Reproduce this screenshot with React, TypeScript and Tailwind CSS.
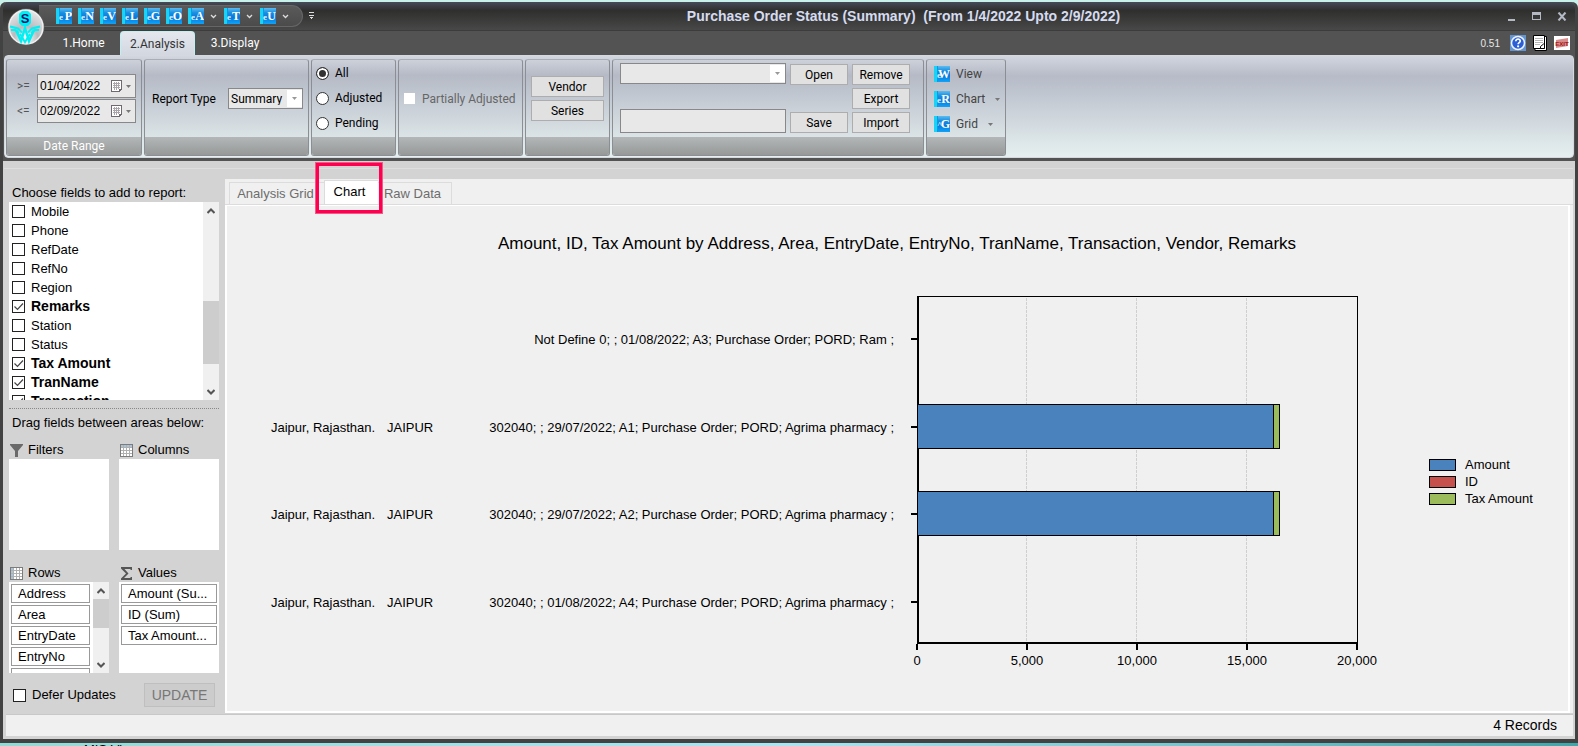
import { useState } from 'react';

const quickTools = [
  { letter: 'P' },
  { letter: 'N' },
  { letter: 'V' },
  { letter: 'L' },
  { letter: 'G' },
  { letter: 'O' },
  { letter: 'A', menu: true },
  { letter: 'T', menu: true },
  { letter: 'U', menu: true },
];

const fieldNames = ['Mobile', 'Phone', 'RefDate', 'RefNo', 'Region', 'Remarks', 'Station', 'Status', 'Tax Amount', 'TranName', 'Transaction'];

const rowFields = ['Address', 'Area', 'EntryDate', 'EntryNo', 'TranName'];
const valueFields = ['Amount (Su...', 'ID (Sum)', 'Tax Amount...'];

const chartRows = [
  { address: '', area: '', rest: 'Not Define 0; ; 01/08/2022; A3; Purchase Order; PORD; Ram ;', amount: 0, tax: 0 },
  { address: 'Jaipur, Rajasthan.', area: 'JAIPUR', rest: '302040; ; 29/07/2022; A1; Purchase Order; PORD; Agrima pharmacy ;', amount: 16200, tax: 250 },
  { address: 'Jaipur, Rajasthan.', area: 'JAIPUR', rest: '302040; ; 29/07/2022; A2; Purchase Order; PORD; Agrima pharmacy ;', amount: 16200, tax: 250 },
  { address: 'Jaipur, Rajasthan.', area: 'JAIPUR', rest: '302040; ; 01/08/2022; A4; Purchase Order; PORD; Agrima pharmacy ;', amount: 0, tax: 0 },
];

const legend = [
  { label: 'Amount', color: '#4a82bd' },
  { label: 'ID', color: '#c6504b' },
  { label: 'Tax Amount', color: '#9cbb5a' },
];

function BookIcon({ letter, prefix = 'e' }: { letter: string; prefix?: string }) {
  return (
    <svg width="16" height="16" viewBox="0 0 16 16" className="shrink-0" aria-hidden="true">
      <defs>
        <linearGradient id="book" x1="0" y1="0" x2="0" y2="1">
          <stop offset="0" stopColor="#5cbcf0" />
          <stop offset="0.3" stopColor="#1a8ee0" />
          <stop offset="0.6" stopColor="#0878dc" />
          <stop offset="1" stopColor="#10a4f8" />
        </linearGradient>
      </defs>
      <rect width="16" height="16" fill="url(#book)" />
      <rect width="4" height="16" fill="#1cd2f4" />
      <rect x="3" width="1" height="16" fill="#0b9be6" />
      <text x="3" y="12" fontSize="9" fontWeight="700" fill="#d8f2ff" fontFamily="Liberation Serif, serif">{prefix}</text>
      <text x="16" y="12" textAnchor="end" fontSize="12" fontWeight="700" fill="#fff" fontFamily="Liberation Serif, serif">{letter}</text>
    </svg>
  );
}

function Caret({ className = '' }: { className?: string }) {
  return (
    <svg width="5" height="3" viewBox="0 0 5 3" className={`shrink-0 ${className}`} aria-hidden="true">
      <path d="M0 0h5L2.5 3z" fill="currentColor" />
    </svg>
  );
}

function Chevron({ up = false }: { up?: boolean }) {
  return (
    <svg width="8" height="6" viewBox="0 0 8 6" aria-hidden="true">
      <path d={up ? 'M0.5 5L4 1.5 7.5 5' : 'M0.5 1L4 4.5 7.5 1'} fill="none" stroke="#555" strokeWidth="2" />
    </svg>
  );
}

function Logo() {
  return (
    <svg width="38" height="38" viewBox="0 0 38 38" aria-hidden="true">
      <defs>
        <radialGradient id="orb" cx="0.5" cy="0.85" r="0.8">
          <stop offset="0" stopColor="#fff" />
          <stop offset="0.45" stopColor="#b9bbbe" />
          <stop offset="1" stopColor="#e2e3e5" />
        </radialGradient>
      </defs>
      <circle cx="19" cy="19" r="18.500" fill="#5c5c5c" />
      <circle cx="19" cy="19" r="17" fill="url(#orb)" stroke="#f0f0f0" strokeWidth="1.500" />
      <path d="M15 3h6l3 3v9l-3 3h-6l-3-3V6z" fill="#00f0f4" />
      <text x="18" y="15" textAnchor="middle" fontSize="13" fontWeight="700" fill="#07156e" fontFamily="Liberation Sans, sans-serif">S</text>
      <g fill="none" stroke="#00f0f4" strokeWidth="2">
        <path d="M3 18.500l8 2 4 4M33 18.500l-8 2-4 4" />
        <path d="M4 22h4l4 3M32 22h-4l-4 3" />
        <path d="M9 22l5 11 4-13 4 13 5-11" strokeWidth="2.500" />
        <path d="M13 26l5 8 5-8" />
      </g>
    </svg>
  );
}

function GridIcon({ side }: { side: 'top' | 'left' }) {
  return (
    <svg width="13" height="13" viewBox="0 0 13 13" shapeRendering="crispEdges" aria-hidden="true">
      <rect width="13" height="13" fill="#7c7c7c" />
      <rect x="1" y="1" width="11" height="11" fill="#fff" />
      {side === 'top' ? <rect x="1" y="1" width="11" height="3" fill="#a9c3dc" /> : <rect x="1" y="1" width="3" height="11" fill="#a9c3dc" />}
      <path d="M3.500 1v11M6.500 1v11M9.500 1v11M1 3.500h11M1 6.500h11M1 9.500h11" stroke="#b0b0b0" />
    </svg>
  );
}

function RibbonGroup({ width, title = '', children }: { width: string; title?: string; children: React.ReactNode }) {
  return (
    <section className={`flex shrink-0 flex-col overflow-hidden rounded-[3px] border border-[#8b8f94] border-t-[#a9adb4] bg-linear-to-b from-[#cdd1da] from-0% via-[#b5bac6] via-16% to-[#e6f0f0] ${width}`}>
      <div className="flex min-h-0 flex-1 flex-col">{children}</div>
      <div className="h-[18px] bg-linear-to-b from-[#b3b7b7] to-[#979999] text-center text-[12px] leading-[18px] text-white">{title}</div>
    </section>
  );
}

function DateField({ label, value }: { label: string; value: string }) {
  return (
    <label className="flex items-center">
      <span className="w-5 text-[12px] text-[#555]">{label}</span>
      <span className="flex h-6 flex-1 items-center border border-[#888] bg-[#e8e8e8] pr-1">
        <input defaultValue={value} className="w-[73px] bg-transparent pl-[2px] font-['Liberation_Sans',Arial,sans-serif] text-[12px] text-black outline-none" />
        <svg width="11" height="12" viewBox="0 0 11 12" shapeRendering="crispEdges" aria-hidden="true">
          <path d="M0 0h11v9l-3 3H0z" fill="#6f6a72" />
          <path d="M1 1h9v8H8v2H1z" fill="#fff" />
          <path d="M3.500 2v8M5.500 2v8M7.500 2v7M2 3.500h7M2 5.500h7M2 7.500h7" stroke="#aaa5ad" />
        </svg>
        <Caret className="ml-1 text-[#777]" />
      </span>
    </label>
  );
}

function RibbonButton({ children, width = 'w-[58px]' }: { children: React.ReactNode; width?: string }) {
  return <button className={`h-[21px] border border-[#adadad] bg-[#e1e1e1] text-[12px] leading-none text-black ${width}`}>{children}</button>;
}

function CheckBox({ id, checked, onChange }: { id: string; checked: boolean; onChange: () => void }) {
  return (
    <span className="relative flex h-[13px] w-[13px] shrink-0">
      <input id={id} type="checkbox" checked={checked} onChange={onChange} className="h-[13px] w-[13px] appearance-none border border-[#222] bg-white" />
      {checked && (
        <svg width="13" height="13" viewBox="0 0 13 13" className="pointer-events-none absolute inset-0" aria-hidden="true">
          <path d="M2.500 6.500l3 3 5.500-6" fill="none" stroke="#444" strokeWidth="1.200" />
        </svg>
      )}
    </span>
  );
}

function FieldChip({ label }: { label: string }) {
  return <li className="h-[19px] shrink-0 truncate border border-[#999] bg-white pl-[6px] text-[13px] leading-[17px]">{label}</li>;
}

function Chart() {
  const left = 691;
  const scale = 440 / 20000;
  return (
    <svg viewBox="0 0 1341 500" preserveAspectRatio="xMinYMin meet" className="h-full w-full" fontFamily="Liberation Sans, Arial, sans-serif" fontSize="13" role="img" aria-label="Amount, ID and Tax Amount by order">
      <text x="670" y="43" textAnchor="middle" fontSize="17">
        Amount, ID, Tax Amount by Address, Area, EntryDate, EntryNo, TranName, Transaction, Vendor, Remarks
      </text>
      <g shapeRendering="crispEdges">
        {[1, 2, 3].map(i => (
          <path key={i} d={`M${left + i * 110 - 1.5} 92V436`} stroke="#cfcfcf" strokeDasharray="3 1" />
        ))}
        <path d="M690 90.500H1130.500V436" fill="none" stroke="#000" />
        <path d="M691 90V437H1131" fill="none" stroke="#000" strokeWidth="2" />
      </g>
      {chartRows.map((row, i) => {
        const mid = [133, 221, 308, 396][i];
        const amount = Math.round(row.amount * scale);
        const tax = Math.round(row.tax * scale);
        return (
          <g key={row.rest}>
            <path d={`M684 ${mid}H690`} stroke="#000" strokeWidth="2" shapeRendering="crispEdges" />
            <text x="44" y={mid + 5}>{row.address}</text>
            <text x="160" y={mid + 5}>{row.area}</text>
            <text x="667" y={mid + 5} textAnchor="end">{row.rest}</text>
            {row.amount > 0 && (
              <g stroke="#000" shapeRendering="crispEdges">
                <rect x="690.500" y={mid - 22.5} width={amount} height="44" fill="#4a82bd" />
                <rect x={690.5 + amount} y={mid - 22.5} width={tax} height="44" fill="#9cbb5a" />
              </g>
            )}
          </g>
        );
      })}
      {[0, 5000, 10000, 15000, 20000].map(tick => (
        <g key={tick}>
          <path d={`M${left - 1 + tick * scale} 438v6`} stroke="#000" strokeWidth="2" shapeRendering="crispEdges" />
          <text x={left - 1 + tick * scale} y="459" textAnchor="middle">{tick.toLocaleString('en-US')}</text>
        </g>
      ))}
      {legend.map((item, i) => (
        <g key={item.label}>
          <rect x="1202.500" y={253.5 + i * 17} width="26" height="11" fill={item.color} stroke="#000" shapeRendering="crispEdges" />
          <text x="1238" y={263 + i * 17}>{item.label}</text>
        </g>
      ))}
    </svg>
  );
}

export default function App() {
  const [checkedFields, setCheckedFields] = useState<string[]>(['Remarks', 'Tax Amount', 'TranName', 'Transaction']);
  const [status, setStatus] = useState('All');
  const [deferUpdates, setDeferUpdates] = useState(false);
  const [tab, setTab] = useState('Chart');

  const toggleField = (name: string) => {
    setCheckedFields(checkedFields.includes(name) ? checkedFields.filter(f => f !== name) : [...checkedFields, name]);
  };

  return (
    <div className="flex h-screen flex-col overflow-hidden bg-[#c9f1ec] pt-[2px] font-['Liberation_Sans',Arial,sans-serif] text-black">
      <div className="flex min-h-0 flex-1 flex-col rounded-t-md border-x-3 border-b-4 border-[#424242] bg-[#535353]">
        {/* title bar */}
        <header className="relative flex h-7 shrink-0 items-center rounded-t-md bg-linear-to-b from-[#454b59] from-0% via-[#2f2f2e] via-30% to-[#484848]">
          <div className="ml-9 flex h-[22px] items-center rounded-r-full border border-l-0 border-[#666] bg-linear-to-b from-[#5a5a5a] to-[#4b4b4b] pr-3 pl-[17px]">
            {quickTools.map(tool => (
              <button key={tool.letter} aria-label={`Tool ${tool.letter}`} className="mr-[6px] flex items-center gap-[6px] text-[#ddd] last:mr-0">
                <BookIcon letter={tool.letter} />
                {tool.menu && (
                  <svg width="7" height="5" viewBox="0 0 7 5" className="mr-[1px]" aria-hidden="true">
                    <path d="M1 1l2.500 2.500L6 1" fill="none" stroke="#ddd" strokeWidth="1.300" />
                  </svg>
                )}
              </button>
            ))}
          </div>
          <button aria-label="Customize toolbar" className="ml-[6px]">
            <svg width="5" height="8" viewBox="0 0 5 8" shapeRendering="crispEdges" aria-hidden="true">
              <path d="M0 0.500h5M0 3.500h5" stroke="#ddd" />
              <path d="M1 5.500h3M2 6.500h1" stroke="#ddd" />
            </svg>
          </button>
          <h1 className="min-w-0 flex-1 truncate pr-[52px] pl-[38px] text-center text-[14px] font-bold whitespace-pre text-[#d5dbf0]">Purchase Order Status (Summary)  (From 1/4/2022 Upto 2/9/2022)</h1>
          <div className="flex items-center gap-4 pr-2">
            <button aria-label="Minimize">
              <svg width="9" height="9" viewBox="0 0 9 9"><path d="M1 7h7v2H1z" fill="#b4b9c4" /></svg>
            </button>
            <button aria-label="Maximize">
              <svg width="9" height="8" viewBox="0 0 9 8"><path d="M0 0h9v8H0zM1 3v4h7V3z" fill="#b4b9c4" fillRule="evenodd" /></svg>
            </button>
            <button aria-label="Close">
              <svg width="10" height="9" viewBox="0 0 10 9"><path d="M1.500 0.500l7 8M8.500 0.500l-7 8" stroke="#b4b9c4" strokeWidth="2" /></svg>
            </button>
          </div>
          <button aria-label="Application menu" className="absolute top-[6px] left-1 z-10 rounded-full">
            <Logo />
          </button>
        </header>

        {/* ribbon tabs */}
        <nav className="flex h-[25px] shrink-0 items-end border-t border-[#3c3c3c] font-[Roboto,sans-serif] text-[12px]">
          <button className="ml-[44px] h-6 w-[73px] text-white">1.Home</button>
          <button className="h-6 w-[75px] rounded-t border border-b-0 border-[#bff0f2] bg-linear-to-b from-[#e4e7ee] to-[#d3d7e0] text-[#333]">2.Analysis</button>
          <button className="h-6 w-[80px] text-white">3.Display</button>
          <div className="ml-auto flex h-6 items-center pr-[5px]">
            <span className="mr-[10px] font-['Liberation_Sans',Arial,sans-serif] text-[10px] text-[#e8e8e8]">0.51</span>
            <button aria-label="Help" className="mr-[7px]">
              <svg width="16" height="16" viewBox="0 0 16 16">
                <rect width="16" height="16" fill="#6495cf" />
                <circle cx="8" cy="8" r="6.500" fill="#2a5fd6" stroke="#eef3ff" strokeWidth="1.500" />
                <path d="M5.800 6.200c0-3 4.600-2.800 4.400 0-.1 1.300-2.100 1.500-2.100 3" fill="none" stroke="#fff" strokeWidth="1.700" />
                <circle cx="8.100" cy="11.300" r="1.100" fill="#fff" />
              </svg>
            </button>
            <button aria-label="Notes" className="mr-[7px]">
              <svg width="14" height="16" viewBox="0 0 14 16">
                <path d="M2 1.500h11.500v14H2z" fill="#fff" stroke="#000" />
                <path d="M0.500 0.500h11v13h-11z" fill="#fff" stroke="#000" />
                <path d="M2 3.500h8M2 5.500h8M2 7.500h8M2 9.500h5" stroke="#b5b5b5" />
                <path d="M7.500 13.500v-2l3-2.500h1v4.500z" fill="#fff" stroke="#000" />
              </svg>
            </button>
            <button aria-label="Exit">
              <svg width="16" height="14" viewBox="0 0 16 14">
                <rect width="16" height="14" fill="#fff" />
                <path d="M2 4l12-2v8L2 12z" fill="#d98a8a" />
                <text x="8" y="10" textAnchor="middle" fontSize="6" fontWeight="700" fill="#a01818" fontFamily="Liberation Sans, sans-serif">EXIT</text>
              </svg>
            </button>
          </div>
        </nav>

        {/* ribbon */}
        <div className="mx-px flex h-[103px] shrink-0 gap-[2px] rounded-[4px] border border-[#d5d8de] bg-linear-to-b from-[#d2d6df] from-0% via-[#b6bbc7] via-20% to-[#e6f0f0] p-px pt-[3px] font-[Roboto,sans-serif]">
          <RibbonGroup width="w-[136px]" title="Date Range">
            <div className="flex flex-col gap-px pt-[14px] pr-[5px] pl-[10px]">
              <DateField label=">=" value="01/04/2022" />
              <DateField label="<=" value="02/09/2022" />
            </div>
          </RibbonGroup>

          <RibbonGroup width="w-[165px]">
            <label className="flex h-full items-center justify-between pr-[5px] pl-[7px] text-[12px]">
              Report Type
              <span className="relative flex">
                <select defaultValue="Summary" className="h-[21px] w-[75px] appearance-none border border-[#888] bg-[#e8e8e8] pl-[2px] text-[12px] leading-none">
                  <option>Summary</option>
                  <option>Detail</option>
                </select>
                <span className="pointer-events-none absolute top-[2px] right-px flex h-[17px] w-[15px] items-center justify-center bg-white text-[#999]">
                  <Caret />
                </span>
              </span>
            </label>
          </RibbonGroup>

          <RibbonGroup width="w-[85px]">
            <div className="flex flex-col gap-[5px] pt-[3px] pl-1 text-[12px]">
              {['All', 'Adjusted', 'Pending'].map(option => (
                <label key={option} className="flex h-5 items-center gap-[6px]">
                  <input
                    type="radio"
                    name="status"
                    checked={status === option}
                    onChange={() => setStatus(option)}
                    className="h-[13px] w-[13px] appearance-none rounded-full border border-[#333] bg-white checked:bg-[#333] checked:shadow-[inset_0_0_0_2px_white]"
                  />
                  {option}
                </label>
              ))}
            </div>
          </RibbonGroup>

          <RibbonGroup width="w-[125px]">
            <label className="flex h-full items-center gap-[7px] pl-[5px] text-[12px] text-[#666]">
              <input type="checkbox" disabled className="h-[11px] w-[11px] shrink-0 appearance-none bg-white" />
              Partially Adjusted
            </label>
          </RibbonGroup>

          <RibbonGroup width="w-[85px]">
            <div className="flex flex-col gap-[3px] px-[5px] pt-4">
              <RibbonButton width="w-full">Vendor</RibbonButton>
              <RibbonButton width="w-full">Series</RibbonButton>
            </div>
          </RibbonGroup>

          <RibbonGroup width="w-[312px]">
            <div className="flex gap-1 pt-[3px] pl-[7px]">
              <div className="flex h-[70px] w-[166px] flex-col justify-between">
                <span className="relative flex">
                  <select aria-label="Saved layout" className="h-[21px] w-full appearance-none border border-[#888] bg-[#e8e8e8]" />
                  <span className="pointer-events-none absolute top-[2px] right-px flex h-[17px] w-[15px] items-center justify-center bg-white text-[#999]">
                    <Caret />
                  </span>
                </span>
                <input aria-label="Layout name" className="h-6 w-full border border-[#888] bg-[#e8e8e8] px-1 text-[12px]" />
              </div>
              <div className="flex h-[70px] flex-col justify-between pt-px">
                <RibbonButton>Open</RibbonButton>
                <RibbonButton>Save</RibbonButton>
              </div>
              <div className="flex h-[70px] flex-col justify-between pt-px">
                <RibbonButton>Remove</RibbonButton>
                <RibbonButton>Export</RibbonButton>
                <RibbonButton>Import</RibbonButton>
              </div>
            </div>
          </RibbonGroup>

          <RibbonGroup width="w-[80px]">
            <div className="flex flex-col gap-[9px] pt-[6px] pl-[7px] text-[12px] text-[#444]">
              <button className="flex h-4 items-center gap-[6px]"><BookIcon letter="W" />View</button>
              <button className="flex h-4 items-center gap-[6px]"><BookIcon letter="R" />Chart<Caret className="ml-1 text-[#777]" /></button>
              <button className="flex h-4 items-center gap-[6px]"><BookIcon letter="G" prefix="^" />Grid<Caret className="ml-1 text-[#777]" /></button>
            </div>
          </RibbonGroup>
        </div>

        {/* work area */}
        <main className="mt-[3px] flex min-h-0 flex-1 flex-col border-x border-[#d3d3d3] bg-[#d3d3d3] pr-px">
          <div className="mt-[7px] h-px bg-[#dedede]" />
          <div className="flex min-h-0 flex-1">
            <aside className="flex w-[221px] shrink-0 flex-col pr-[6px] pl-[5px] text-[13px]">
              <h2 className="mt-[14px] h-[19px] pl-[3px] leading-[20px]">Choose fields to add to report:</h2>
              <div className="flex h-[198px] shrink-0 overflow-hidden bg-white">
                <ul className="flex-1">
                  {fieldNames.map(name => (
                    <li key={name} className="flex h-[19px] items-center gap-[6px] pl-[3px]">
                      <CheckBox id={name} checked={checkedFields.includes(name)} onChange={() => toggleField(name)} />
                      <label htmlFor={name} className={checkedFields.includes(name) ? 'text-[14px] font-bold' : ''}>{name}</label>
                    </li>
                  ))}
                </ul>
                <div className="flex w-4 flex-col items-center bg-[#f0f0f0]">
                  <span className="flex h-[17px] items-center"><Chevron up /></span>
                  <span className="mt-[82px] h-[63px] w-full bg-[#cdcdcd]" />
                  <span className="mt-auto flex h-4 items-center"><Chevron /></span>
                </div>
              </div>
              <div className="mt-2 border-t border-dotted border-[#888]" />
              <h2 className="mt-[5px] h-[18px] pl-[3px] leading-[18px]">Drag fields between areas below:</h2>
              <div className="mt-[9px] grid grid-cols-2 gap-x-[10px]">
                <section>
                  <h3 className="flex h-[18px] items-center gap-[5px] pl-px">
                    <svg width="13" height="13" viewBox="0 0 13 13" aria-hidden="true"><path d="M0 0h13v1L8 7v6H5V7L0 1z" fill="#6a6a6a" /></svg>
                    Filters
                  </h3>
                  <div className="h-[91px] bg-white" />
                </section>
                <section>
                  <h3 className="flex h-[18px] items-center gap-[5px] pl-px"><GridIcon side="top" />Columns</h3>
                  <div className="h-[91px] bg-white" />
                </section>
                <section className="mt-[14px]">
                  <h3 className="flex h-[18px] items-center gap-[5px] pl-px"><GridIcon side="left" />Rows</h3>
                  <div className="flex h-[91px] overflow-hidden bg-white">
                    <ul className="flex flex-1 flex-col gap-[2px] py-[2px] pr-[3px] pl-[2px]">
                      {rowFields.map(name => <FieldChip key={name} label={name} />)}
                    </ul>
                    <div className="flex w-4 flex-col items-center bg-[#f0f0f0]">
                      <span className="flex h-[17px] items-center"><Chevron up /></span>
                      <span className="h-[29px] w-full bg-[#cdcdcd]" />
                      <span className="mt-auto flex h-4 items-center"><Chevron /></span>
                    </div>
                  </div>
                </section>
                <section className="mt-[14px]">
                  <h3 className="flex h-[18px] items-center gap-[5px] pl-px">
                    <svg width="13" height="13" viewBox="0 0 13 13" aria-hidden="true"><path d="M1 0h11v3h-1.500V2H4.500L8.500 6.500 4 11h6.500v-1H12v3H1v-1.500L6 6.500 1 1.500z" fill="#555" /></svg>
                    Values
                  </h3>
                  <ul className="flex h-[91px] flex-col gap-[2px] bg-white p-[2px]">
                    {valueFields.map(name => <FieldChip key={name} label={name} />)}
                  </ul>
                </section>
              </div>
              <div className="mt-[10px] flex items-center pr-[4px] pl-1">
                <CheckBox id="defer" checked={deferUpdates} onChange={() => setDeferUpdates(!deferUpdates)} />
                <label htmlFor="defer" className="ml-[6px]">Defer Updates</label>
                <button disabled className="ml-auto h-6 w-[71px] border border-[#bfbfbf] bg-[#cccccc] text-[14px] leading-none text-[#777]">UPDATE</button>
              </div>
            </aside>

            {/* report tabs */}
            <section className="mt-[10px] flex min-w-0 flex-1 flex-col bg-[#f0f0f0]">
              <div role="tablist" className="flex h-[26px] shrink-0 items-end border-b border-[#dcdcdc] pl-1 text-[13px] text-[#6d6d6d]">
                <button role="tab" onClick={() => setTab('Analysis Grid')} className="h-[22px] w-[95px] border-t border-l border-[#dcdcdc] pr-[3px] pl-0 text-center whitespace-nowrap">Analysis Grid</button>
                <div className="relative">
                  <button role="tab" aria-selected={tab === 'Chart'} onClick={() => setTab('Chart')} className="h-6 w-[54px] border-t border-l border-[#dcdcdc] bg-white pr-1 pb-[2px] text-black">Chart</button>
                  <span className="pointer-events-none absolute -top-[18px] -left-[9px] z-10 h-[52px] w-[68px] border-4 border-[#ff0050] outline -outline-offset-1 outline-[#f25a8a]" />
                </div>
                <button role="tab" onClick={() => setTab('Raw Data')} className="h-[22px] w-[74px] border-t border-r border-[#dcdcdc] pr-1 whitespace-nowrap">Raw Data</button>
              </div>
              <div className="mr-[3px] min-h-0 flex-1 border-2 border-t border-l-2 border-white">
                <Chart />
              </div>
            </section>
          </div>
          <footer className="mt-px mb-[3px] ml-[2px] flex h-[22px] shrink-0 items-center justify-end border-t border-[#c8c8c8] bg-[#f0f0f0] pr-4 text-[14px]">4 Records</footer>
        </main>
      </div>
      <div className="h-[3px] shrink-0 overflow-hidden bg-linear-to-r from-[#8edcd6] via-[#a5e6f5] to-[#3ba8ac] pl-[84px] text-[13px] leading-none">MIS Vi</div>
    </div>
  );
}
